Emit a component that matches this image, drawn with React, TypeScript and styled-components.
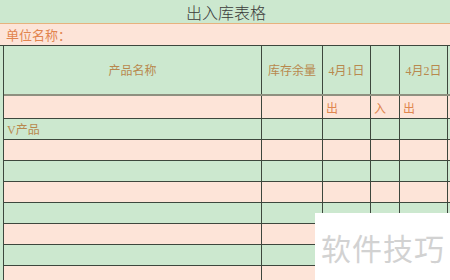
import React from "react";
import styled, { createGlobalStyle } from "styled-components";

const GlobalStyle = createGlobalStyle`
  html, body {
    margin: 0;
    padding: 0;
    width: 450px;
    height: 280px;
    overflow: hidden;
    font-family: "Liberation Serif", "Noto Sans CJK SC", serif;
  }
`;

const Page = styled.div`
  position: relative;
  width: 450px;
  height: 280px;
  overflow: hidden;
  background-color: #cce8cf;
`;

const Title = styled.div`
  height: 24px;
  box-sizing: border-box;
  border-bottom: 1px solid #e6b27e;
  display: flex;
  align-items: center;
  justify-content: center;
  padding-left: 2px;
  font-family: "Noto Sans CJK SC", sans-serif;
  font-size: 16px;
  font-weight: 300;
  color: #3a3a3a;
`;

const UnitRow = styled.div`
  height: 22px;
  box-sizing: border-box;
  background-color: #fde4d8;
  border-bottom: 1px solid #3d473d;
  display: flex;
  align-items: center;
  padding-left: 6px;
  font-family: "Noto Sans CJK SC", sans-serif;
  font-size: 13px;
  color: #e2844f;
`;

const Sheet = styled.div`
  margin-left: 3px;
  border-left: 1px solid #3d473d;
  width: 470px;
`;

const Row = styled.div<{ $pink?: boolean; $h: number; $thick?: boolean }>`
  display: flex;
  height: ${(p) => p.$h}px;
  box-sizing: border-box;
  background-color: ${(p) => (p.$pink ? "#fde4d8" : "#cce8cf")};
  border-bottom: ${(p) => (p.$thick ? "2px solid #8e9080" : "1px solid #3d473d")};
`;

const Cell = styled.div<{ $w: number; $align?: string; $valign?: string }>`
  width: ${(p) => p.$w}px;
  flex: none;
  box-sizing: border-box;
  border-right: 1px solid #3d473d;
  display: flex;
  justify-content: ${(p) => p.$align || "flex-start"};
  align-items: ${(p) => p.$valign || "center"};
  padding: 0 3px 1px 3px;
  font-family: "Liberation Serif", "Noto Sans CJK SC", serif;
  font-size: 12px;
  color: #b8884e;
  white-space: nowrap;
  overflow: hidden;
`;

const Mark = styled.span`
  color: #e0864f;
  font-size: 12px;
  padding-top: 2px;
`;

const Watermark = styled.div`
  position: absolute;
  left: 315px;
  top: 213px;
  right: 0;
  bottom: 0;
  background: #ffffff;
  display: flex;
  align-items: center;
  padding-left: 6px;
  font-family: "Noto Sans CJK SC", sans-serif;
  font-size: 30px;
  letter-spacing: 1px;
  color: #d2d2d2;
`;

const widths = [258, 61, 48, 29, 48, 30];

const App = () => {
  const bodyRows = Array.from({ length: 8 }, (_, i) => i);
  return (
    <Page>
      <GlobalStyle />
      <Title>出入库表格</Title>
      <UnitRow>单位名称：</UnitRow>
      <Sheet>
        <Row $h={50} $thick>
          <Cell $w={widths[0]} $align="center">产品名称</Cell>
          <Cell $w={widths[1]} $align="center">库存余量</Cell>
          <Cell $w={widths[2]} $align="center">4月1日</Cell>
          <Cell $w={widths[3]} />
          <Cell $w={widths[4]} $align="center">4月2日</Cell>
          <Cell $w={widths[5]} />
        </Row>
        <Row $h={23} $pink>
          <Cell $w={widths[0]} />
          <Cell $w={widths[1]} />
          <Cell $w={widths[2]}><Mark>出</Mark></Cell>
          <Cell $w={widths[3]}><Mark>入</Mark></Cell>
          <Cell $w={widths[4]}><Mark>出</Mark></Cell>
          <Cell $w={widths[5]} />
        </Row>
        {bodyRows.map((i) => (
          <Row key={i} $h={21} $pink={i % 2 === 1}>
            <Cell $w={widths[0]} $valign="flex-end">{i === 0 ? "V产品" : ""}</Cell>
            {widths.slice(1).map((w, j) => (
              <Cell key={j} $w={w} />
            ))}
          </Row>
        ))}
      </Sheet>
      <Watermark>软件技巧</Watermark>
    </Page>
  );
};

export default App;
